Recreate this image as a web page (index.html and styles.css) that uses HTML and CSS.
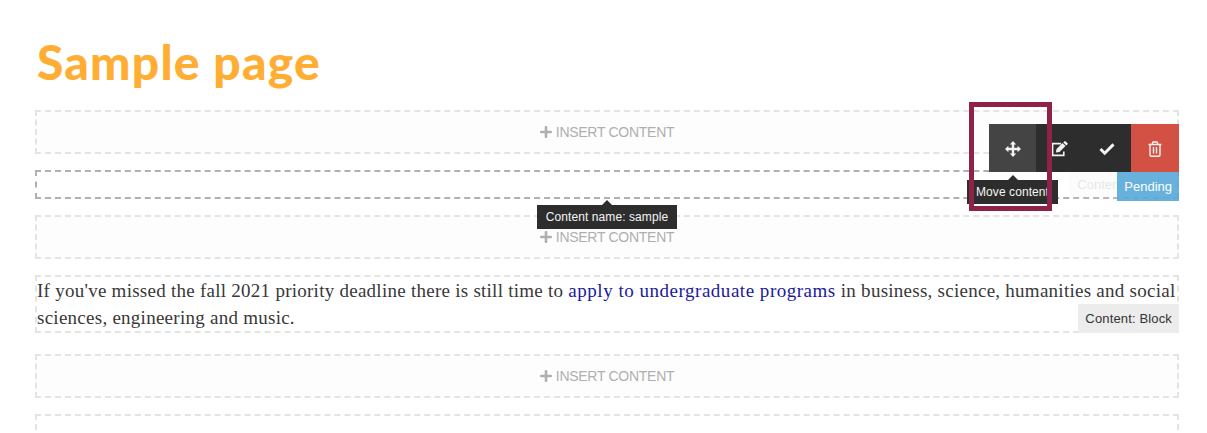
FILE: index.html
```html
<!DOCTYPE html>
<html lang="en">

<head>
    <meta charset="UTF-8">
    <meta name="viewport" content="width=device-width, initial-scale=1.0">
    <title>Sample page</title>
    <link rel="stylesheet" href="styles.css">
</head>

<body>
    <h1>Sample page</h1>

    <div class="insert">
        <svg class="plus" viewBox="0 0 12 12"><path d="M6 1.2v9.6M1.2 6h9.6"/></svg>
        <span>INSERT CONTENT</span>
    </div>

    <div class="content banner">
        <span class="content-label faded">Content: Banner</span>
        <div class="toolbar">
            <a class="tool move">
                <svg width="16" height="16" viewBox="0 0 16 16"><path d="M8 0l3.200 3.400H9.200V6.800h3.400V4.800L16 8l-3.400 3.200V9.200H9.200v3.400h2L8 16l-3.200-3.400h2V9.200H3.400v2L0 8l3.400-3.200v2h3.400V3.400h-2z"/></svg>
            </a>
            <a class="tool">
                <svg width="18" height="16" viewBox="0 0 18 16"><path class="line" d="M10 2.6H1.6v11.8h11.2v-4"/><path d="M4.9 11.600l.6-3.500 6-6 3 3-6 6zM12.300 1.400l1-1q.7-.7 1.400 0L16.400 2q.7.7 0 1.400l-1.100 1z"/></svg>
            </a>
            <a class="tool">
                <svg width="16" height="16" viewBox="0 0 16 16"><path class="check" d="M1.500 8l4.200 4.200 8.800-8.800"/></svg>
            </a>
            <a class="tool delete">
                <svg width="14" height="16" viewBox="0 0 14 16"><path class="trash" d="M.500 3.500h13M4 3.300L5 1h4l1 2.300M2 3.500v10.300q0 1.500 1.300 1.500h7.400q1.300 0 1.300-1.500V3.500M5.500 6v6.500M8.500 6v6.500"/></svg>
            </a>
        </div>
        <span class="pending">Pending</span>
        <span class="tooltip name-tip">Content name: sample</span>
        <span class="tooltip move-tip">Move content</span>
        <div class="highlight"></div>
    </div>

    <div class="insert">
        <svg class="plus" viewBox="0 0 12 12"><path d="M6 1.2v9.6M1.2 6h9.6"/></svg>
        <span>INSERT CONTENT</span>
    </div>

    <div class="content block">
        <p>If you've missed the fall 2021 priority deadline there is still time to <a href="#">apply to undergraduate programs</a> in business, science, humanities and social<br>sciences, engineering and music.</p>
        <span class="content-label">Content: Block</span>
    </div>

    <div class="insert">
        <svg class="plus" viewBox="0 0 12 12"><path d="M6 1.2v9.6M1.2 6h9.6"/></svg>
        <span>INSERT CONTENT</span>
    </div>

    <div class="content last"></div>
</body>

</html>
```

FILE: styles.css
```css
* {
    box-sizing: border-box;
}

body {
    font-family: "Liberation Sans", Arial, sans-serif;
    margin: 0;
    padding: 32px 28px 0 35px;
    height: 433px;
    overflow: hidden;
    background: #fff;
}

h1 {
    font-family: Lato, sans-serif;
    font-size: 48px;
    font-weight: 900;
    line-height: 60px;
    letter-spacing: 1.2px;
    color: #ffae33;
    margin: 0 0 18px;
    padding-left: 2px;
}

.insert {
    display: flex;
    align-items: center;
    justify-content: center;
    gap: 4px;
    height: 44px;
    margin-bottom: 16px;
    border: 2px dashed #e4e4e4;
    background: #fdfdfd;
    color: #afafaf;
    font-size: 14px;
    letter-spacing: -0.28px;
}

.plus {
    width: 12px;
    height: 12px;
    fill: none;
    stroke: #afafaf;
    stroke-width: 2.6;
    stroke-linecap: round;
}

.content {
    position: relative;
    height: 29px;
    margin-bottom: 16px;
    border: 2px dashed #e4e4e4;
}

.banner {
    border-color: #b0b0b0;
}

.block {
    height: 58px;
    margin-bottom: 21px;
}

.last {
    height: 16px;
    margin-bottom: 0;
    border-bottom: 0;
}

.block p {
    margin: 0;
    font-family: "Liberation Serif", Georgia, serif;
    font-size: 19px;
    line-height: 27px;
    letter-spacing: 0.26px;
    color: #383838;
    white-space: nowrap;
}

.block a {
    color: #1a1a9c;
    letter-spacing: 0.52px;
    text-decoration: none;
}

.content-label,
.pending {
    position: absolute;
    right: -2px;
    bottom: -2px;
    height: 29px;
    padding: 0 7px;
    background: #ececec;
    color: #333;
    font-size: 13px;
    line-height: 29px;
    white-space: nowrap;
}

.block .content-label {
    letter-spacing: 0.15px;
}

.faded {
    opacity: 0.12;
}

/* Editing tools */
.toolbar {
    position: absolute;
    top: -48px;
    right: -2px;
    display: flex;
    width: 190px;
    height: 48px;
}

.tool {
    display: flex;
    flex: 1;
    align-items: center;
    justify-content: center;
    padding-top: 2px;
    background: #2d2d2d;
}

.tool svg {
    fill: #f2f2f2;
}

.tool .line,
.tool .check,
.tool .trash {
    fill: none;
    stroke: #f2f2f2;
    stroke-width: 1.6;
}

.tool .check {
    stroke-width: 3;
}

.tool .trash {
    stroke-width: 1.4;
}

.tool.move {
    flex: 0 0 47px;
    background: #444;
}

.tool.delete {
    flex: 0 0 48px;
    background: #d35044;
}

.pending {
    bottom: -4px;
    background: rgba(86, 168, 216, 0.9);
    color: #fff;
}

.tooltip {
    position: absolute;
    height: 24px;
    background: #2d2d2d;
    color: #f5f5f5;
    font-size: 12px;
    line-height: 24px;
    letter-spacing: 0.08px;
    text-align: center;
    white-space: nowrap;
}

.tooltip::before {
    content: "";
    position: absolute;
    top: -5px;
    left: 50%;
    margin-left: -5px;
    border: 5px solid transparent;
    border-top: 0;
    border-bottom-color: #2d2d2d;
}

.name-tip {
    top: 33px;
    left: 500px;
    width: 140px;
}

.move-tip {
    top: 8px;
    right: 119px;
    width: 91px;
}

.highlight {
    position: absolute;
    top: -70px;
    right: 125px;
    width: 83px;
    height: 109px;
    border: 5px solid #8f2249;
}
```
